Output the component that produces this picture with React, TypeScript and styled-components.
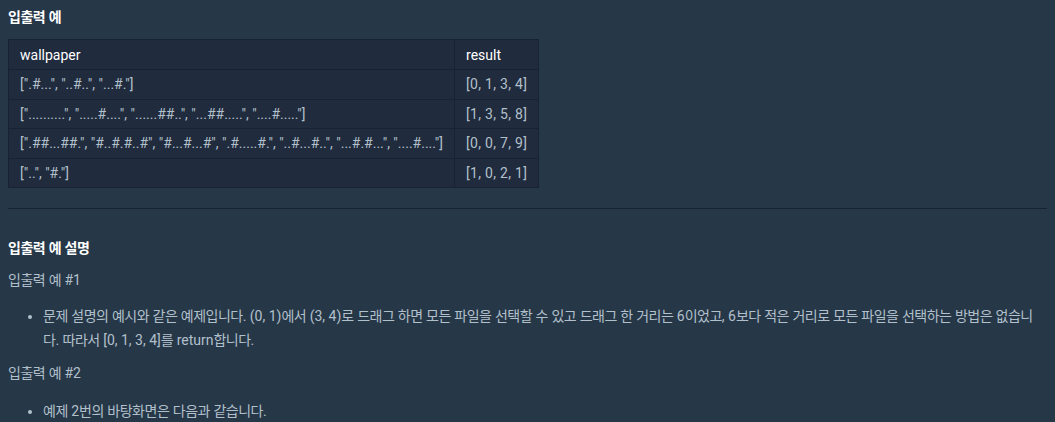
import React from "react";
import styled, { createGlobalStyle } from "styled-components";

const Global = createGlobalStyle`
  html, body { margin: 0; padding: 0; background: #263747; }
  body { font-family: Roboto, "Noto Sans CJK KR", sans-serif; color: #b2c0cc; }
`;

const Page = styled.div`
  padding: 0 8px;
  width: 1055px;
  box-sizing: border-box;
`;

const Ko = styled.span`
  font-family: "Noto Sans CJK KR", sans-serif;
  letter-spacing: -0.5px;
  line-height: 1;
`;

const HANGUL = /([\u1100-\u11FF\u3130-\u318F\uAC00-\uD7A3]+)/;

function K({ children }: { children: string }) {
  const parts = children.split(HANGUL);
  return (
    <>
      {parts.map((part, i) =>
        i % 2 === 1 ? <Ko key={i}>{part}</Ko> : <React.Fragment key={i}>{part}</React.Fragment>
      )}
    </>
  );
}

const Heading = styled.h5<{ $top: number }>`
  margin: 0;
  font-size: 14px;
  font-weight: 700;
  color: #ffffff;
  line-height: 20px;
  padding-top: ${(p) => p.$top}px;
`;

const Table = styled.table`
  margin-top: 12px;
  border-collapse: collapse;
  background: #202b3d;
  font-size: 14px;
  border: 1px solid #172334;
`;

const Th = styled.th`
  text-align: left;
  font-weight: 400;
  color: #ffffff;
  height: 29px;
  padding: 0 11px;
  border: 1px solid #172334;
`;

const Td = styled.td<{ $num?: boolean }>`
  color: #b2c0cc;
  height: 28.5px;
  padding: 0 11px;
  border: 1px solid #172334;
  white-space: nowrap;
  letter-spacing: ${(p) => (p.$num ? "0.3px" : "0")};
`;

const Rule = styled.hr`
  margin: 20px 0 0;
  border: 0;
  border-top: 1px solid #172334;
  height: 0;
`;

const Para = styled.p<{ $top: number }>`
  margin: 0;
  font-size: 14px;
  line-height: 24px;
  padding-top: ${(p) => p.$top}px;
`;

const List = styled.ul<{ $top: number }>`
  margin: 0;
  padding: ${(p) => p.$top}px 0 0 35px;
  font-size: 14px;
  line-height: 24px;
  word-break: break-all;
`;

const rows: [string, string][] = [
  ['[".#...", "..#..", "...#."]', "[0, 1, 3, 4]"],
  ['["..........", ".....#....", "......##..", "...##.....", "....#....."]', "[1, 3, 5, 8]"],
  ['[".##...##.", "#..#.#..#", "#...#...#", ".#.....#.", "..#...#..", "...#.#...", "....#...."]', "[0, 0, 7, 9]"],
  ['["..", "#."]', "[1, 0, 2, 1]"],
];

export default function App() {
  return (
    <Page>
      <Global />
      <Heading $top={7}>
        <K>입출력 예</K>
      </Heading>
      <Table>
        <thead>
          <tr>
            <Th>wallpaper</Th>
            <Th>result</Th>
          </tr>
        </thead>
        <tbody>
          {rows.map(([a, b], i) => (
            <tr key={i}>
              <Td>{a}</Td>
              <Td $num>{b}</Td>
            </tr>
          ))}
        </tbody>
      </Table>
      <Rule />
      <Heading $top={29}>
        <K>입출력 예 설명</K>
      </Heading>
      <Para $top={10}>
        <K>입출력 예 #1</K>
      </Para>
      <List $top={12}>
        <li>
          <K>
            문제 설명의 예시와 같은 예제입니다. (0, 1)에서 (3, 4)로 드래그 하면 모든 파일을 선택할 수 있고 드래그 한 거리는 6이었고, 6보다 적은 거리로 모든 파일을 선택하는 방법은 없습니다. 따라서 [0, 1, 3, 4]를 return합니다.
          </K>
        </li>
      </List>
      <Para $top={9}>
        <K>입출력 예 #2</K>
      </Para>
      <List $top={14}>
        <li>
          <K>예제 2번의 바탕화면은 다음과 같습니다.</K>
        </li>
      </List>
    </Page>
  );
}
